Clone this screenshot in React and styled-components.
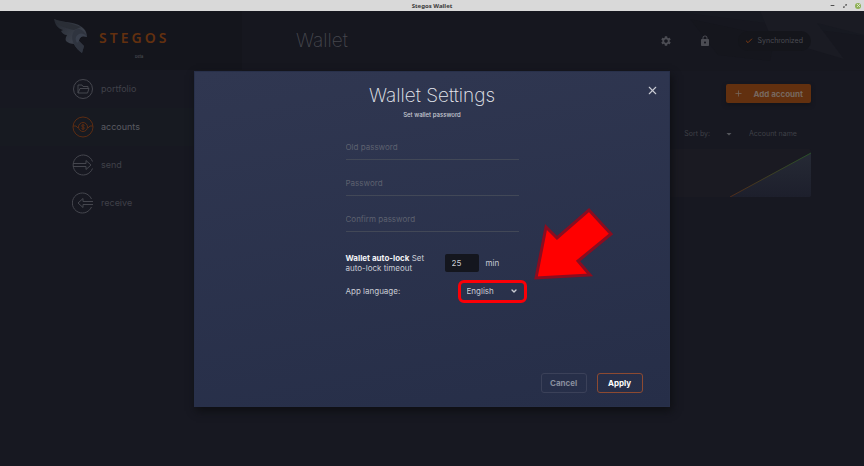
import React from "react";
import styled, { createGlobalStyle } from "styled-components";
import { Check, ChevronDown, Maximize2, Minus, Plus, X } from "lucide-react";
import { MdLock, MdSettings, MdArrowDropDown } from "react-icons/md";

const Global = createGlobalStyle`
  *, *::before, *::after { box-sizing: border-box; }
  html, body, #root { height: 100%; }
  body {
    margin: 0;
    background: #171821;
    font-family: Inter, "Open Sans", sans-serif;
    font-size: 8px;
    line-height: 10px;
    overflow: hidden;
  }
  button, input, select { font: inherit; color: inherit; margin: 0; }
  h1, h2, p { margin: 0; }
`;

const Screen = styled.div`
  min-height: 100vh;
  display: flex;
  flex-direction: column;
`;

const TitleBar = styled.div`
  height: 11px;
  flex: none;
  display: grid;
  grid-template-columns: 1fr auto 1fr;
  align-items: center;
  background: #d9d9d9;
  color: #3a3a3a;
  font-family: "Noto Sans", sans-serif;
  font-size: 6px;
  font-weight: 700;
`;

const WindowButtons = styled.div`
  grid-column: 3;
  display: flex;
  justify-content: flex-end;
  align-items: center;
  gap: 7px;
  padding-right: 3px;
`;

const WindowButton = styled.button`
  width: 6px;
  height: 6px;
  display: grid;
  place-items: center;
  padding: 0;
  border: 0;
  border-radius: 50%;
  background: ${(p) => (p.$close ? "#8fb158" : "transparent")};
  color: ${(p) => (p.$close ? "#e6eed8" : "#333")};
`;

const Workspace = styled.div`
  position: relative;
  flex: 1;
  display: grid;
  grid-template-columns: 28% 1fr;
`;

const Sidebar = styled.aside`
  background: #171821;
`;

const Brand = styled.div`
  height: 59px;
  display: flex;
  align-items: flex-start;
  gap: 10px;
  padding: 7px 0 0 53px;
  background: #14151c;
`;

const BrandText = styled.div`
  display: grid;
  padding-top: 12px;
  justify-items: center;
`;

const BrandName = styled.span`
  color: #63300f;
  font-family: "Noto Sans", sans-serif;
  font-size: 14px;
  line-height: 16px;
  font-weight: 600;
  letter-spacing: 3px;
`;

const BrandTag = styled.span`
  padding-top: 8px;
  padding-left: 10px;
  color: #55565c;
  font-size: 4px;
  line-height: 6px;
`;

const Nav = styled.nav`
  display: grid;
`;

const NavLink = styled.a`
  height: 38px;
  display: flex;
  align-items: center;
  gap: 7px;
  padding-left: 72px;
  text-decoration: none;
  font-size: 9px;
  background: ${(p) => (p.$active ? "#171a21" : "transparent")};
  color: ${(p) => (p.$active ? "#5a5b62" : "#404149")};
`;

const NavIcon = styled.svg`
  width: 22px;
  height: 22px;
  fill: none;
  stroke: ${(p) => (p.$active ? "#5c2c12" : "#45464e")};
`;

const Main = styled.main`
  min-width: 0;
  display: flex;
  flex-direction: column;
`;

const Header = styled.header`
  position: relative;
  height: 60px;
  display: flex;
  align-items: center;
  padding: 0 53px 0 54px;
  background: #16171f;
  color: #4b4c53;
`;

const HeaderArt = styled.svg`
  position: absolute;
  top: 0;
  right: 0;
  height: 60px;
`;

const PageTitle = styled.h1`
  position: relative;
  margin-right: auto;
  color: #45464d;
  font-size: 19px;
  line-height: 22px;
  font-weight: 200;
`;

const IconButton = styled.button`
  position: relative;
  display: grid;
  padding: 0;
  margin-right: 27px;
  border: 0;
  background: none;
`;

const SyncBadge = styled.div`
  position: relative;
  height: 20px;
  display: flex;
  align-items: center;
  gap: 5px;
  padding: 0 8px 0 7px;
  border-radius: 10px;
  background: #14151b;
  font-size: 7px;
  svg { color: #7d3a12; }
`;

const Content = styled.section`
  display: grid;
  padding: 13px 53px 0 54px;
`;

const AddButton = styled.button`
  justify-self: end;
  height: 19px;
  display: flex;
  align-items: center;
  gap: 10px;
  padding: 0 8px;
  border: 0;
  border-radius: 2px;
  background: #62300f;
  color: #77685f;
  font-weight: 700;
  box-shadow: 0 2px 4px #12131a;
`;

const SortRow = styled.label`
  display: flex;
  justify-content: flex-end;
  align-items: center;
  padding: 24px 14px 8px 0;
  color: #3f4047;
  font-size: 7px;
  svg { margin: 0 14px 0 13px; color: #55565c; }
`;

const SortSelect = styled.select`
  appearance: none;
  height: 14px;
  padding: 0;
  border: 0;
  background: none;
  color: #3f4047;
`;

const AccountCard = styled.div`
  height: 48px;
  display: flex;
  justify-content: flex-end;
  align-items: flex-end;
  border-radius: 2px;
  overflow: hidden;
  background: #1a1a22;
`;

const Overlay = styled.div`
  position: absolute;
  inset: 0;
  display: grid;
  place-items: center;
`;

const Dialog = styled.section`
  position: relative;
  width: 55%;
  min-width: 360px;
  display: flex;
  flex-direction: column;
  align-items: center;
  padding: 13px 26px;
  border: 1px solid #28304a;
  background: linear-gradient(170deg, #303751, #262e48);
  color: #c9ccd4;
  box-shadow: 2px 4px 8px #0e0f13;
`;

const CloseButton = styled.button`
  position: absolute;
  top: 12px;
  right: 10px;
  display: grid;
  padding: 0;
  border: 0;
  background: none;
`;

const DialogTitle = styled.h2`
  color: #e6e8ee;
  font-size: 19px;
  line-height: 22px;
  font-weight: 200;
`;

const Subtitle = styled.p`
  padding-top: 3px;
  font-size: 6px;
  font-weight: 500;
`;

const Form = styled.form`
  width: 173px;
  display: grid;
  grid-template-columns: 100%;
  padding-top: 16px;
`;

const PasswordField = styled.input`
  width: 100%;
  height: 24px;
  margin-bottom: 12px;
  padding: 0;
  border: 0;
  border-bottom: 1px solid #424857;
  outline: 0;
  background: none;
  &::placeholder { color: #5d616f; opacity: 1; }
`;

const FormRow = styled.div`
  display: flex;
  align-items: center;
  padding-top: ${(p) => p.$gap};
`;

const LockLabel = styled.label`
  width: 99px;
  flex: none;
  padding-right: 12px;
  b { color: #f2f3f6; }
`;

const MinutesInput = styled.input`
  width: 34px;
  height: 18px;
  margin-right: 7px;
  padding: 0 7px;
  border: 0;
  border-radius: 2px;
  background: #14161e;
`;

const LanguageLabel = styled.label`
  width: 112px;
  flex: none;
`;

const LanguagePicker = styled.div`
  position: relative;
  width: 69px;
  height: 23px;
  flex: none;
  display: grid;
  align-items: center;
  border: 3px solid #fb0007;
  border-radius: 6px;
`;

const LanguageSelect = styled.select`
  grid-area: 1 / 1;
  appearance: none;
  width: 100%;
  height: 17px;
  padding: 0 6px;
  border: 0;
  background: none;
`;

const PickerIcon = styled(ChevronDown)`
  grid-area: 1 / 1;
  justify-self: end;
  margin-right: 6px;
  pointer-events: none;
`;

const PointerArrow = styled.svg`
  position: absolute;
  left: 72px;
  bottom: 18px;
  width: 82px;
  height: 76px;
  pointer-events: none;
`;

const Actions = styled.div`
  align-self: flex-end;
  display: flex;
  gap: 10px;
  padding-top: 70px;
`;

const ActionButton = styled.button`
  width: 46px;
  height: 20px;
  padding: 0;
  border: 1px solid ${(p) => (p.$primary ? "#8d4a31" : "#3b4159")};
  border-radius: 3px;
  background: none;
  color: ${(p) => (p.$primary ? "#fff" : "#888d9d")};
  font-weight: 700;
`;

const Logo = () => (
  <svg width="36" height="36" viewBox="0 0 36 36" aria-hidden="true">
    <defs>
      <linearGradient id="wing" x1="0" y1="0" x2="1" y2="1">
        <stop offset="0" stopColor="#242830" />
        <stop offset="0.6" stopColor="#3a3f4a" />
        <stop offset="1" stopColor="#292d38" />
      </linearGradient>
    </defs>
    <path d="M1 1c8 3 16 3 22 5 6 2 11 6 11 13-4-2-8 0-8 4l5 5-2 7c-3-2-6-5-8-9-3 0-6-1-8-3-1-2 0-4 1-6-3 0-5-2-6-4l2-1C4 10 2 6 1 1Z" fill="url(#wing)" />
    <path d="M20 15c2-5 9-7 14 4-4-2-8 0-8 4l5 5-2 7c-6-4-12-12-9-20Z" fill="#2f343f" />
    <path d="M23 19c2-4 7-5 11 0-4-2-8 0-8 4l-2 2c-1-2-2-4-1-6Z" fill="#393f4c" />
    <path d="M1 1c8 4 18 4 27 8l-7 3C11 10 4 7 1 1Z" fill="#2a2e36" />
  </svg>
);

const navItems = [
  {
    name: "portfolio",
    icon: (
      <>
        <circle cx="11" cy="11" r="9.5" />
        <path d="M6 15V7h4l1 1.500h5v2M6 15V15l2-4.500h9L15.500 15Z" />
      </>
    ),
  },
  {
    name: "accounts",
    active: true,
    icon: (
      <>
        <circle cx="11" cy="11" r="10" />
        <circle cx="11" cy="11" r="4.500" />
        <path d="M1 10h3l2 2M21 10h-3l-2 2M12.500 9.500c-1-1-3-.7-3 .4 0 1.300 3 .9 3 2.200 0 1-2 1.300-3 .4M11 8v6" />
      </>
    ),
  },
  {
    name: "send",
    icon: (
      <>
        <path d="M20.500 7.500a10 10 0 1 0 0 7" />
        <path d="M1 9.500h13v-3l5 4.500-5 4.500v-3H1" />
      </>
    ),
  },
  {
    name: "receive",
    icon: (
      <>
        <path d="M19.500 7a10 10 0 1 0 0 8" />
        <path d="M21 9.500H11v-3L6 11l5 4.500v-3h10" />
      </>
    ),
  },
];

export default function App() {
  return (
    <Screen>
      <Global />
      <TitleBar>
        <span />
        <span>Stegos Wallet</span>
        <WindowButtons>
          <WindowButton aria-label="Minimize"><Minus size={5} strokeWidth={4} /></WindowButton>
          <WindowButton aria-label="Restore"><Maximize2 size={4} strokeWidth={3} /></WindowButton>
          <WindowButton $close aria-label="Close window"><X size={5} strokeWidth={4} /></WindowButton>
        </WindowButtons>
      </TitleBar>
      <Workspace>
        <Sidebar>
          <Brand>
            <Logo />
            <BrandText>
              <BrandName>STEGOS</BrandName>
              <BrandTag>beta</BrandTag>
            </BrandText>
          </Brand>
          <Nav>
            {navItems.map((item) => (
              <NavLink key={item.name} href={`#${item.name}`} $active={item.active}>
                <NavIcon viewBox="0 0 22 22" $active={item.active} aria-hidden="true">{item.icon}</NavIcon>
                {item.name}
              </NavLink>
            ))}
          </Nav>
        </Sidebar>
        <Main>
          <Header>
            <HeaderArt viewBox="0 0 264 60" aria-hidden="true">
              <path d="M70 0h194v25L150 10Z" fill="#171921" />
              <path d="M90 8l85 18-5 24L118 44Z" fill="#15161d" />
              <path d="M160 0h104v24L217 12l27 36-34-10-40-14Z" fill="#1a1b23" />
            </HeaderArt>
            <PageTitle>Wallet</PageTitle>
            <IconButton aria-label="Settings"><MdSettings size={12} /></IconButton>
            <IconButton aria-label="Lock"><MdLock size={12} /></IconButton>
            <SyncBadge><Check size={8} strokeWidth={3} />Synchronized</SyncBadge>
          </Header>
          <Content>
            <AddButton><Plus size={9} />Add account</AddButton>
            <SortRow>
              Sort by:
              <MdArrowDropDown size={12} />
              <SortSelect><option>Account name</option></SortSelect>
            </SortRow>
            <AccountCard>
              <svg width="81" height="45" viewBox="0 0 81 45" aria-hidden="true">
                <defs>
                  <linearGradient id="area" x1="0" y1="0" x2="0" y2="1">
                    <stop offset="0" stopColor="#262a35" />
                    <stop offset="1" stopColor="#1d1f2c" />
                  </linearGradient>
                  <linearGradient id="trend">
                    <stop offset="0" stopColor="#512b19" />
                    <stop offset="1" stopColor="#28512a" />
                  </linearGradient>
                </defs>
                <path d="M0 45L81 1V45Z" fill="url(#area)" />
                <path d="M0 45L81 1" stroke="url(#trend)" />
              </svg>
            </AccountCard>
          </Content>
        </Main>
        <Overlay>
          <Dialog role="dialog" aria-modal="true" aria-labelledby="dialog-title">
            <CloseButton aria-label="Close"><X size={13} strokeWidth={2} /></CloseButton>
            <DialogTitle id="dialog-title">Wallet Settings</DialogTitle>
            <Subtitle>Set wallet password</Subtitle>
            <Form id="settings" onSubmit={(e) => e.preventDefault()}>
              <PasswordField type="password" placeholder="Old password" aria-label="Old password" />
              <PasswordField type="password" placeholder="Password" aria-label="Password" />
              <PasswordField type="password" placeholder="Confirm password" aria-label="Confirm password" />
              <FormRow $gap="9px">
                <LockLabel htmlFor="timeout"><b>Wallet auto-lock</b> Set auto-lock timeout</LockLabel>
                <MinutesInput id="timeout" defaultValue="25" />
                min
              </FormRow>
              <FormRow $gap="7px">
                <LanguageLabel htmlFor="language">App language:</LanguageLabel>
                <LanguagePicker>
                  <LanguageSelect id="language"><option>English</option></LanguageSelect>
                  <PickerIcon size={8} strokeWidth={4} />
                  <PointerArrow viewBox="0 0 82 76" aria-hidden="true">
                    <path d="M3 72L13 21l11 11L56 4l22 24-33 27 12 14Z" fill="#ff0000" stroke="#8a0d20" strokeWidth="3" />
                  </PointerArrow>
                </LanguagePicker>
              </FormRow>
            </Form>
            <Actions>
              <ActionButton type="button">Cancel</ActionButton>
              <ActionButton type="submit" form="settings" $primary>Apply</ActionButton>
            </Actions>
          </Dialog>
        </Overlay>
      </Workspace>
    </Screen>
  );
}
